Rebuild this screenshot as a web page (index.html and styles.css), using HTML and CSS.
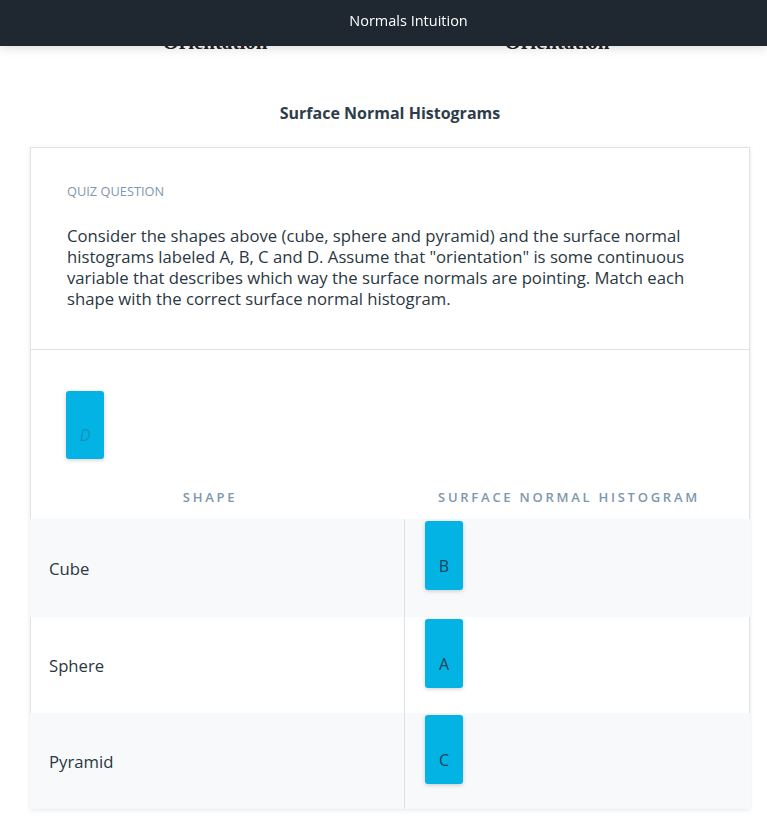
FILE: index.html
```html
<!DOCTYPE html>
<html>
<head>
<meta charset="utf-8">
<link rel="stylesheet" href="styles.css">
</head>
<body>
<header class="topbar"><span class="topbar-title">Normals Intuition</span></header>
<main class="page">
  <div class="captions">
    <div class="caption">Orientation</div>
    <div class="caption">Orientation</div>
  </div>
  <h2 class="section-title">Surface Normal Histograms</h2>
  <section class="quiz-card">
    <div class="question">
      <div class="quiz-label">QUIZ QUESTION</div>
      <p class="question-text">Consider the shapes above (cube, sphere and pyramid) and the surface normal histograms labeled A, B, C and D. Assume that "orientation" is some continuous variable that describes which way the surface normals are pointing. Match each shape with the correct surface normal histogram.</p>
    </div>
    <div class="answers">
      <div class="pool">
        <div class="chip chip-placeholder">D</div>
      </div>
      <div class="match-head">
        <div class="head-cell">SHAPE</div>
        <div class="head-cell">SURFACE NORMAL HISTOGRAM</div>
      </div>
      <div class="match-rows">
        <div class="row row-shaded row-first">
          <div class="shape-cell">Cube</div>
          <div class="drop-cell"><div class="chip">B</div></div>
        </div>
        <div class="row">
          <div class="shape-cell">Sphere</div>
          <div class="drop-cell"><div class="chip">A</div></div>
        </div>
        <div class="row row-shaded">
          <div class="shape-cell">Pyramid</div>
          <div class="drop-cell"><div class="chip">C</div></div>
        </div>
      </div>
    </div>
  </section>
</main>
</body>
</html>
```
FILE: styles.css
```css
html, body {
  margin: 0;
  padding: 0;
  background: #ffffff;
}
body {
  font-family: "Open Sans", "Noto Sans", sans-serif;
  color: #2e3d49;
}
.topbar {
  position: fixed;
  top: 0;
  left: 0;
  right: 0;
  height: 46px;
  background: #1f2731;
  display: flex;
  align-items: center;
  justify-content: center;
  padding-left: 50px;
  box-sizing: border-box;
  box-shadow: 0 2px 10px rgba(0, 0, 0, 0.14);
  z-index: 10;
}
.topbar-title {
  color: #ffffff;
  font-size: 14.5px;
  line-height: 20px;
  margin-top: -5px;
}
.page {
  padding: 0 17px 30px 30px;
}
.captions {
  display: grid;
  grid-template-columns: 342px 342px;
  padding-left: 14px;
  margin-top: 30px;
}
.caption {
  font-family: "Liberation Serif", "Times New Roman", serif;
  font-weight: 700;
  font-size: 21px;
  line-height: 24px;
  text-align: center;
  color: #222;
}
.section-title {
  margin: 47px 0 22px;
  font-size: 16px;
  line-height: 24px;
  font-weight: 700;
  text-align: center;
  color: #2e3d49;
}
.quiz-card {
  border: 1px solid #dde3e8;
  box-shadow: 0 1px 4px rgba(46, 61, 73, 0.12);
  background: #fff;
}
.question {
  padding: 35px 37px 40px 36px;
  border-bottom: 1px solid #dde3e8;
}
.quiz-label {
  font-size: 12.8px;
  line-height: 16px;
  color: #7d97ad;
}
.question-text {
  margin: 26px 0 0;
  font-size: 16.7px;
  line-height: 21px;
  font-weight: 400;
  color: #2a3742;
}
.answers {
  padding-top: 41px;
}
.pool {
  padding-left: 35px;
  display: flex;
}
.chip {
  width: 38px;
  height: 69px;
  box-sizing: border-box;
  background: #02b3e4;
  border-radius: 3px;
  box-shadow: 0 1px 4px rgba(0, 0, 0, 0.2);
  display: flex;
  align-items: flex-end;
  justify-content: center;
  padding-bottom: 13px;
  font-size: 16px;
  line-height: 22px;
  color: #1d4459;
}
.chip-placeholder {
  height: 68px;
  font-style: italic;
  color: rgba(46, 61, 73, 0.3);
}
.match-head {
  display: grid;
  grid-template-columns: 374px 1fr;
  margin-top: 29px;
  margin-bottom: 13px;
}
.head-cell {
  text-align: center;
  padding-right: 16px;
  font-size: 13px;
  line-height: 18px;
  font-weight: 600;
  letter-spacing: 2.75px;
  color: #7d97ad;
}
.match-rows {
  margin: 0 -1px -1px;
}
.row {
  display: grid;
  grid-template-columns: 375px 1fr;
  height: 96px;
}
.row-first {
  height: 98px;
}
.row-shaded {
  background: #f7f9fa;
}
.shape-cell {
  display: flex;
  align-items: center;
  padding-left: 19px;
  font-size: 16.7px;
  color: #2a3742;
  border-right: 1px solid #dde3e8;
}
.drop-cell {
  padding: 2px 0 0 20px;
}
```
